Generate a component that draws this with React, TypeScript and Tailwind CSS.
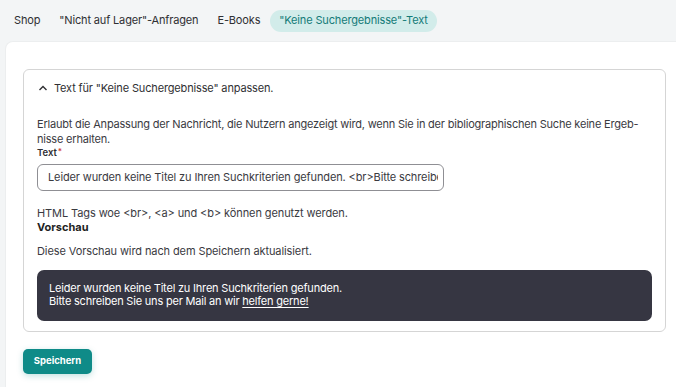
import React from "react";

const font = { fontFamily: "Inter, 'Noto Sans', sans-serif" };

export default function App() {
  return (
    <div className="w-[676px] h-[387px] overflow-hidden bg-[#f3f5f6] text-[#2f2f33]" style={font}>
      <div className="flex items-center h-[41px] pl-[14px] text-[11px] tracking-[-0.15px]">
        <div>Shop</div>
        <div className="ml-[19px]">"Nicht auf Lager"-Anfragen</div>
        <div className="ml-[19px]">E-Books</div>
        <div className="ml-[10px] flex items-center h-[22px] px-[9px] rounded-full bg-[#d2ecea] text-[#147b78]">"Keine Suchergebnisse"-Text</div>
      </div>
      <div className="ml-[5px] h-[346px] bg-white rounded-tl-[8px] border-l border-t border-[#eceeef] pl-[17px] pt-[27px]">
        <div className="w-[643px] border border-[#d5d5d5] rounded-[6px] px-[13px] pb-[10px]">
          <div className="flex items-center h-[36px] text-[11px] tracking-[-0.15px]">
            <svg width="10" height="10" viewBox="0 0 10 10" className="mr-[6px] ml-[1px]">
              <path d="M1.5 7 L5 3.5 L8.5 7" fill="none" stroke="#2f2f33" strokeWidth="1.4" />
            </svg>
            <span>Text für "Keine Suchergebnisse" anpassen.</span>
          </div>
          <div className="pt-[11px] text-[11px] leading-[15px] tracking-[-0.2px] text-[#3a3a3f]">
            Erlaubt die Anpassung der Nachricht, die Nutzern angezeigt wird, wenn Sie in der bibliographischen Suche keine Ergeb-
            <br />
            nisse erhalten.
          </div>
          <div className="flex items-start h-[12px] text-[9.5px] font-semibold leading-[12px] text-[#2f2f33]">
            Text<span className="text-[#d23a3a] text-[8px] leading-[8px] ml-[1px]">*</span>
          </div>
          <div className="mt-[5px] w-[407px] h-[27px] border border-[#8f8f94] rounded-[6px] flex items-center pl-[10px] overflow-hidden whitespace-nowrap text-[11px] tracking-[-0.12px] text-[#3a3a3f]">
            <span className="w-[390px] overflow-hidden">Leider wurden keine Titel zu Ihren Suchkriterien gefunden. &lt;br&gt;Bitte schreiben Sie</span>
          </div>
          <div className="mt-[15px] text-[11px] leading-[14px] tracking-[-0.1px] text-[#3a3a3f]">
            HTML Tags woe &lt;br&gt;, &lt;a&gt; und &lt;b&gt; können genutzt werden.
          </div>
          <div className="text-[11px] leading-[14px] font-bold text-[#1f1f23]">Vorschau</div>
          <div className="mt-[10px] text-[11px] leading-[14px] tracking-[-0.1px] text-[#3a3a3f]">
            Diese Vorschau wird nach dem Speichern aktualisiert.
          </div>
          <div className="mt-[12px] w-[615px] h-[51px] rounded-[7px] bg-[#363642] text-white text-[11px] leading-[13px] tracking-[-0.2px] px-[12px] pt-[12px]">
            Leider wurden keine Titel zu Ihren Suchkriterien gefunden.
            <br />
            Bitte schreiben Sie uns per Mail an wir <span className="underline underline-offset-[2px]">helfen gerne!</span>
          </div>
        </div>
        <button className="mt-[17px] w-[69px] h-[25px] rounded-[5px] bg-[#0f8b88] text-white text-[9.5px] font-bold shadow-[0_2px_6px_rgba(15,139,136,0.25)]">
          Speichern
        </button>
      </div>
    </div>
  );
}
